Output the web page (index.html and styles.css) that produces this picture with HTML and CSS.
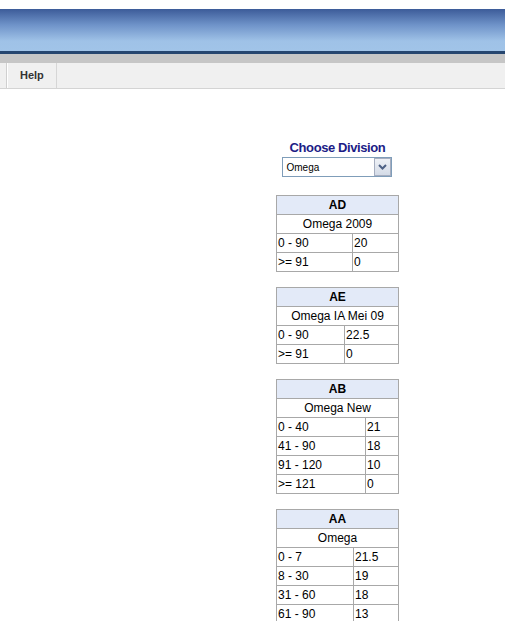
FILE: index.html
```html
<!DOCTYPE html>
<html>
<head>
<meta charset="utf-8">
<link rel="stylesheet" href="styles.css">
</head>
<body>
<div class="top-space"></div>
<div class="banner"></div>
<div class="gray-band"></div>
<div class="nav">
  <div class="nav-lead"></div>
  <div class="nav-item">Help</div>
</div>
<div class="content">
  <div class="column">
    <div class="title">Choose Division</div>
    <div class="select">
      <span class="select-text">Omega</span>
      <span class="select-btn"><svg width="9" height="6" viewBox="0 0 9 6"><path d="M1 1 L4.5 4.5 L8 1" fill="none" stroke="#4d6185" stroke-width="2"/></svg></span>
    </div>

    <table class="grid ad">
      <tr><th colspan="2">AD</th></tr>
      <tr><td colspan="2" class="name">Omega 2009</td></tr>
      <tr><td class="first">0 - 90</td><td>20</td></tr>
      <tr><td>&gt;= 91</td><td>0</td></tr>
    </table>

    <table class="grid ae">
      <tr><th colspan="2">AE</th></tr>
      <tr><td colspan="2" class="name">Omega IA Mei 09</td></tr>
      <tr><td class="first">0 - 90</td><td>22.5</td></tr>
      <tr><td>&gt;= 91</td><td>0</td></tr>
    </table>

    <table class="grid ab">
      <tr><th colspan="2">AB</th></tr>
      <tr><td colspan="2" class="name">Omega New</td></tr>
      <tr><td class="first">0 - 40</td><td>21</td></tr>
      <tr><td>41 - 90</td><td>18</td></tr>
      <tr><td>91 - 120</td><td>10</td></tr>
      <tr><td>&gt;= 121</td><td>0</td></tr>
    </table>

    <table class="grid aa">
      <tr><th colspan="2">AA</th></tr>
      <tr><td colspan="2" class="name">Omega</td></tr>
      <tr><td class="first">0 - 7</td><td>21.5</td></tr>
      <tr><td>8 - 30</td><td>19</td></tr>
      <tr><td>31 - 60</td><td>18</td></tr>
      <tr><td>61 - 90</td><td>13</td></tr>
    </table>
  </div>
</div>
</body>
</html>
```
FILE: styles.css
```css
html, body {
  margin: 0;
  padding: 0;
  background: #ffffff;
  font-family: "Liberation Sans", Arial, sans-serif;
  overflow: hidden;
}
.top-space {
  height: 9px;
}
.banner {
  height: 42px;
  background: linear-gradient(to bottom, #3c5b99 0px, #6f93c9 16px, #9fc2e7 32px, #a1c4e8 42px);
  border-bottom: 3px solid #26466f;
}
.gray-band {
  height: 9px;
  background: #c6c6c6;
}
.nav {
  height: 25px;
  background: #f0f0f0;
  border-bottom: 1px solid #d4d4d4;
  display: flex;
}
.nav-lead {
  width: 6px;
  border-right: 1px solid #d0d0d0;
}
.nav-item {
  width: 50px;
  border-left: 1px solid #ffffff;
  border-right: 1px solid #d6d6d6;
  font-size: 11px;
  font-weight: bold;
  color: #333333;
  line-height: 25px;
  padding-left: 12px;
  box-sizing: border-box;
}
.content {
  padding-left: 276px;
  padding-top: 51px;
}
.column {
  width: 123px;
  display: flex;
  flex-direction: column;
  align-items: center;
}
.title {
  font-size: 13px;
  font-weight: bold;
  color: #1c1c86;
  line-height: 16px;
  height: 16px;
  letter-spacing: -0.4px;
}
.select {
  width: 110px;
  height: 20px;
  box-sizing: border-box;
  border: 1px solid #7f9db9;
  background: #fff;
  display: flex;
  align-items: center;
  justify-content: space-between;
  margin-right: 2px;
  margin-top: 1px;
}
.select-text {
  font-size: 10px;
  color: #000;
  padding-left: 4px;
}
.select-btn {
  width: 17px;
  height: 18px;
  box-sizing: border-box;
  border: 1px solid #a6aec0;
  background: linear-gradient(to bottom, #eef1f6, #d4dbe7);
  display: flex;
  align-items: center;
  justify-content: center;
}
.grid {
  width: 123px;
  border-collapse: collapse;
  font-size: 12px;
  color: #000;
  margin-top: 18px;
  margin-bottom: -3px;
}
.grid th, .grid td {
  border: 1px solid #a8a8a8;
  height: 19px;
  padding: 0 1px;
  line-height: 16px;
  box-sizing: border-box;
}
.grid th {
  background: #e3eaf8;
  font-weight: bold;
  text-align: center;
}
.grid td {
  text-align: left;
}
.grid td.name {
  text-align: center;
}
.ad td.first { width: 76px; }
.ae td.first { width: 68px; }
.ab td.first { width: 89px; }
.aa td.first { width: 77px; }
```
